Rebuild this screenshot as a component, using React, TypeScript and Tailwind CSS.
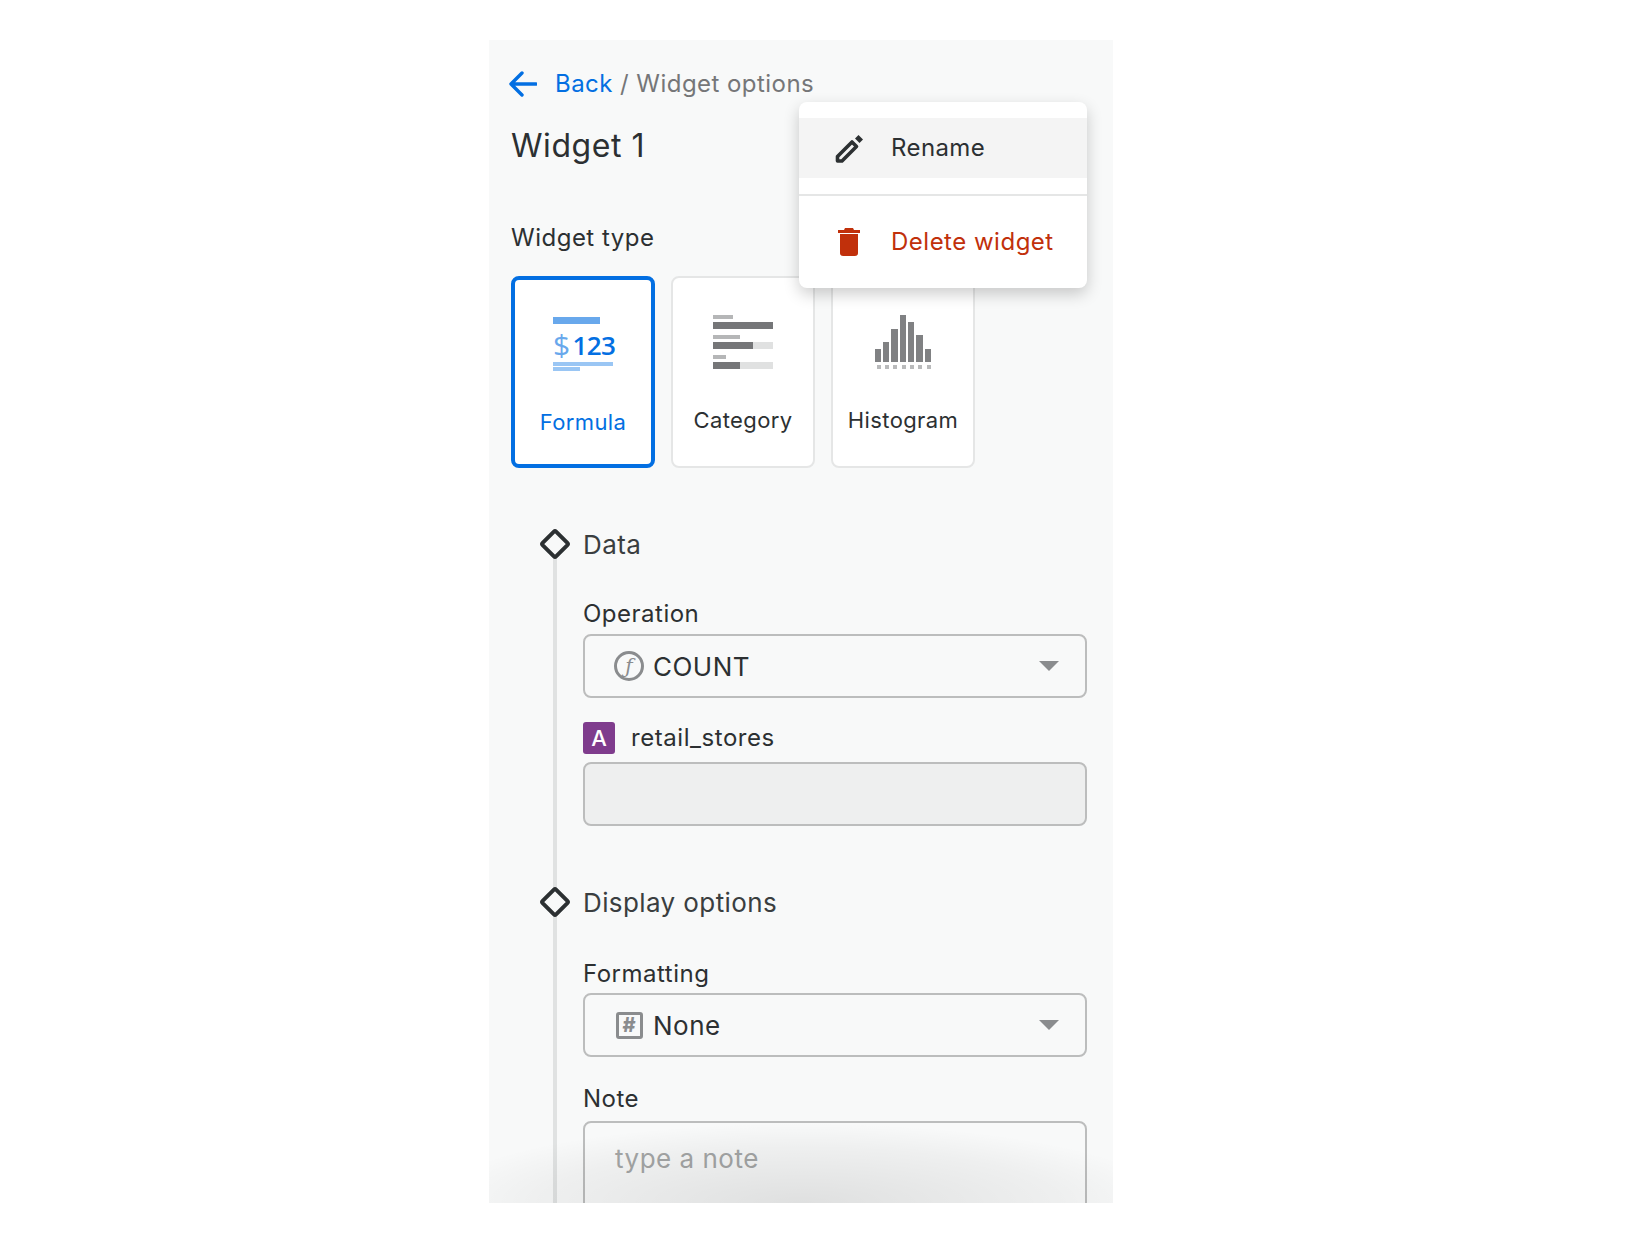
const font = { fontFamily: 'Inter, "Liberation Sans", sans-serif' };

function Diamond() {
  return (
    <svg width="32" height="32" viewBox="0 0 32 32" className="shrink-0">
      <rect x="6.5" y="6.5" width="19" height="19" rx="1.5" transform="rotate(45 16 16)" fill="#f8f9f9" stroke="#2c3032" strokeWidth="4" />
    </svg>
  );
}

function Chevron() {
  return (
    <svg width="20" height="10" viewBox="0 0 20 10" className="shrink-0">
      <path d="M0 0h20L10 10z" fill="#8a8c8e" />
    </svg>
  );
}

function PencilIcon() {
  return (
    <svg width="30" height="30" viewBox="0 0 30 30" className="shrink-0">
      <path d="M2.5 23.5L17 9l4.5 4.5L7 28H2.5z" fill="none" stroke="#2c3032" strokeWidth="3.6" strokeLinejoin="round" />
      <path d="M20 5.5l3.5-3.5 4.5 4.5-3.5 3.5z" fill="#2c3032" />
    </svg>
  );
}

function TrashIcon() {
  return (
    <svg width="22" height="28" viewBox="0 0 22 28" className="shrink-0">
      <path d="M7 0h8l1 2h6v3H0V2h6z" fill="#c1300b" />
      <path d="M2 6h18v19a3 3 0 0 1-3 3H5a3 3 0 0 1-3-3z" fill="#c1300b" />
    </svg>
  );
}

function FormulaIcon() {
  return (
    <div className="flex flex-col items-start w-[62px] ml-[2px]">
      <div className="w-[47px] h-[7px] bg-[#68a8ec]" />
      <div className="flex items-center h-[38px] pt-[4px] leading-none font-semibold text-[26px] tracking-[-0.6px]" style={{ fontFamily: '"Open Sans", sans-serif' }}>
        <span className="text-[#68a8ec] font-medium text-[30px] mr-[3px]">$</span>
        <span className="text-[#036fe2]">123</span>
      </div>
      <div className="w-[60px] h-[4px] bg-[#9ac6f4]" />
      <div className="w-[27px] h-[4px] mt-[1px] bg-[#9ac6f4]" />
    </div>
  );
}

function CategoryIcon() {
  const rows = [
    { short: 20, fill: 60 },
    { short: 27, fill: 40 },
    { short: 13, fill: 27 },
  ];
  return (
    <div className="flex flex-col w-[60px] gap-[6px]">
      {rows.map((r) => (
        <div key={r.short} className="flex flex-col gap-[3px]">
          <div className="h-[4px] bg-[#b5b6b7]" style={{ width: r.short }} />
          <div className="h-[7px] bg-[#e0e1e1]">
            <div className="h-[7px] bg-[#757678]" style={{ width: r.fill }} />
          </div>
        </div>
      ))}
    </div>
  );
}

function HistogramIcon() {
  const bars = [13, 20, 33, 47, 40, 27, 13];
  return (
    <div className="flex flex-col gap-[3px] w-[57px]">
      <div className="flex items-end h-[47px] gap-[2px]">
        {bars.map((h, i) => (
          <div key={i} className="w-[6.4px] bg-[#808183]" style={{ height: h }} />
        ))}
      </div>
      <div className="flex gap-[4.4px] pl-[2px]">
        {bars.map((_, i) => (
          <div key={i} className="w-[4px] h-[4px] bg-[#b9babb]" />
        ))}
      </div>
    </div>
  );
}

function TypeCard({ label, active, children }: { label: string; active?: boolean; children: React.ReactNode }) {
  return (
    <div
      className={
        active
          ? 'w-[144px] h-[192px] rounded-[8px] border-[4px] border-[#036fe2] bg-white flex flex-col items-center pt-[37px]'
          : 'w-[144px] h-[192px] rounded-[8px] border-[2px] border-[#e5e6e6] bg-white flex flex-col items-center pt-[37px]'
      }
    >
      <div className="h-[71px] flex items-start justify-center">{children}</div>
      <div
        className={
          active
            ? 'mt-[18px] text-[22px] leading-[32px] tracking-[0.4px] font-[430] text-[#036fe2]'
            : 'mt-[18px] text-[22px] leading-[32px] tracking-[0.4px] font-[430] text-[#2c3032]'
        }
      >
        {label}
      </div>
    </div>
  );
}

function SelectBox({ icon, value }: { icon: React.ReactNode; value: string }) {
  return (
    <div className="h-[64px] rounded-[8px] border-2 border-[#bcbdbd] flex items-center pl-[29px] pr-[26px]">
      <div className="w-[30px] flex justify-center shrink-0">{icon}</div>
      <div className="ml-[9px] pt-[1px] text-[26px] tracking-[0.5px] font-[430] text-[#2c3032] flex-1">{value}</div>
      <Chevron />
    </div>
  );
}

function FieldLabel({ children }: { children: React.ReactNode }) {
  return <div className="text-[24px] leading-[32px] tracking-[0.5px] font-[430] text-[#2c3032]">{children}</div>;
}

export default function App() {
  return (
    <div className="min-h-[1248px] bg-white pt-[40px]" style={font}>
      <div className="relative ml-[489px] w-[624px] h-[1163px] bg-[#f8f9f9] overflow-hidden">
        <div className="flex items-center h-[32px] mt-[28px] pl-[20px]">
          <svg width="28" height="26" viewBox="0 0 28 26" fill="none" stroke="#036fe2" strokeWidth="3.4" strokeLinecap="round" strokeLinejoin="round">
            <path d="M27 13H2M13 2L2 13l11 11" />
          </svg>
          <div className="ml-[18px] text-[24px] tracking-[0.45px] font-[430] text-[#757678]">
            <span className="text-[#036fe2]">Back</span> / Widget options
          </div>
        </div>

        <div className="mt-[26px] pl-[22px] text-[32px] leading-[40px] tracking-[0.55px] font-[430] text-[#2c3032]">Widget 1</div>

        <div className="mt-[56px] pl-[22px] text-[24px] leading-[32px] tracking-[0.5px] font-[430] text-[#2c3032]">Widget type</div>

        <div className="mt-[22px] ml-[22px] flex gap-[16px]">
          <TypeCard label="Formula" active>
            <FormulaIcon />
          </TypeCard>
          <TypeCard label="Category">
            <CategoryIcon />
          </TypeCard>
          <TypeCard label="Histogram">
            <HistogramIcon />
          </TypeCard>
        </div>

        <div className="relative mt-[60px] ml-[50px] pr-[26px]">
          <div className="absolute left-[14px] top-[16px] bottom-[-400px] w-[4px] bg-[#e0e2e2]" />

          <div className="relative flex items-center h-[32px]">
            <Diamond />
            <div className="ml-[12px] text-[26px] tracking-[0.4px] text-[#3a3e40]">Data</div>
          </div>

          <div className="relative ml-[44px]">
            <div className="mt-[38px]">
              <FieldLabel>Operation</FieldLabel>
            </div>
            <div className="mt-[4px]">
              <SelectBox
                value="COUNT"
                icon={
                  <div className="w-[30px] h-[30px] rounded-full border-[3px] border-[#8a8c8e] flex items-center justify-center text-[#8a8c8e] text-[20px] italic leading-none" style={{ fontFamily: '"DejaVu Serif", serif' }}>
                    ƒ
                  </div>
                }
              />
            </div>

            <div className="mt-[24px] flex items-center h-[32px]">
              <div className="w-[32px] h-[32px] rounded-[3px] bg-[#7f3c8d] text-white text-[22px] font-medium flex items-center justify-center">A</div>
              <div className="ml-[16px] pb-[1px] text-[24px] tracking-[0.55px] font-[430] text-[#2c3032]">retail_stores</div>
            </div>
            <div className="mt-[8px] h-[64px] rounded-[8px] border-2 border-[#bcbdbd] bg-[#eeefef]" />
          </div>

          <div className="relative mt-[60px] flex items-center h-[32px]">
            <Diamond />
            <div className="ml-[12px] text-[26px] tracking-[0.4px] text-[#3a3e40]">Display options</div>
          </div>

          <div className="relative ml-[44px]">
            <div className="mt-[40px]">
              <FieldLabel>Formatting</FieldLabel>
            </div>
            <div className="mt-[3px]">
              <SelectBox
                value="None"
                icon={
                  <div className="w-[27px] h-[27px] rounded-[3px] border-[3.5px] border-[#8a8c8e] flex items-center justify-center text-[#8a8c8e] text-[20px] font-extrabold leading-none">
                    #
                  </div>
                }
              />
            </div>
            <div className="mt-[26px]">
              <FieldLabel>Note</FieldLabel>
            </div>
            <div className="mt-[6px] h-[160px] rounded-[8px] border-2 border-[#bcbdbd] pl-[30px] pt-[16px] text-[26px] tracking-[0.5px] font-[430] text-[#a5a7a7]">
              type a note
            </div>
          </div>
        </div>

        <div className="absolute left-0 right-0 bottom-0 h-[80px] bg-[radial-gradient(ellipse_60%_100%_at_50%_100%,rgba(0,0,0,0.1),rgba(0,0,0,0.04)_70%,transparent)]" />

        <div className="absolute left-[310px] top-[62px] w-[288px] h-[186px] bg-white rounded-[8px] shadow-[0_6px_16px_rgba(0,0,0,0.2)] flex flex-col pt-[16px]">
          <div className="h-[60px] bg-[#f4f4f4] flex items-center pl-[36px]">
            <PencilIcon />
            <div className="ml-[26px] text-[24px] tracking-[0.4px] font-[430] text-[#2c3032]">Rename</div>
          </div>
          <div className="mt-[16px] h-[2px] bg-[#e5e6e6]" />
          <div className="flex-1 flex items-center pl-[39px]">
            <TrashIcon />
            <div className="ml-[31px] text-[24px] tracking-[0.5px] font-[430] text-[#c1300b]">Delete widget</div>
          </div>
        </div>
      </div>
    </div>
  );
}
